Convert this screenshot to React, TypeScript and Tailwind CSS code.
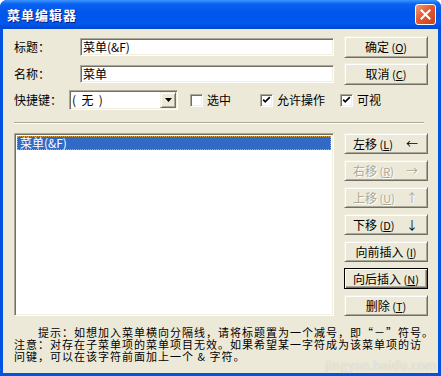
import React from 'react';

const raised =
  'border border-t-[#f1efe2] border-l-[#f1efe2] border-r-[#716f64] border-b-[#716f64] shadow-[inset_1px_1px_0_#fff,inset_-1px_-1px_0_#aca899]';
const sunken =
  'border border-t-[#aca899] border-l-[#aca899] border-r-white border-b-white shadow-[inset_1px_1px_0_#716f64,inset_-1px_-1px_0_#f1efe2]';

interface BtnProps {
  children: React.ReactNode;
  disabled?: boolean;
  isDefault?: boolean;
  arrow?: string;
  className?: string;
}

const Btn: React.FC<BtnProps> = ({ children, disabled, isDefault, arrow, className = '' }) => {
  const frame = isDefault
    ? 'border border-black shadow-[inset_1px_1px_0_#fff,inset_-1px_-1px_0_#716f64,inset_-2px_-2px_0_#aca899]'
    : raised;
  const tone = disabled ? 'text-[#aca899] [text-shadow:1px_1px_0_#fff]' : 'text-black';
  return (
    <div className={`w-[84px] bg-[#ece9d8] flex items-center text-[12px] leading-none ${frame} ${tone} ${arrow ? 'justify-between pl-[8px] pr-[9px]' : 'justify-center'} ${className}`}>
      <span className="whitespace-nowrap">{children}</span>
      {arrow && <span className="text-[12px]">{arrow}</span>}
    </div>
  );
};

const Check: React.FC<{ checked?: boolean; label: string; className?: string }> = ({ checked, label, className = '' }) => (
  <div className={`flex items-center ${className}`}>
    <div className={`w-[13px] h-[13px] bg-white relative ${sunken}`}>
      {checked && (
        <svg width="13" height="13" viewBox="0 0 13 13" className="absolute -left-px -top-px">
          <path d="M3.2 5.6 L5.3 7.8 L9.8 3.2" stroke="#000" strokeWidth="1.7" fill="none" />
        </svg>
      )}
    </div>
    <span className="ml-[4px] text-[12px] leading-none">{label}</span>
  </div>
);

const Key: React.FC<{ k: string }> = ({ k }) => (
  <span className="text-[11px]">
    {' '}(<span className="underline">{k}</span>)
  </span>
);

export default function App() {
  return (
    <div
      lang="zh-CN"
      className="w-[441px] h-[376px] bg-white font-['Noto_Sans_CJK_SC',sans-serif] text-black [text-spacing-trim:space-all]"
    >
      <div className="w-full h-full flex flex-col rounded-t-[7px] overflow-hidden bg-[#0052e0]">
        {/* title bar */}
        <div className="h-[29px] flex items-center bg-[linear-gradient(to_bottom,#3d95ff_0%,#0a62f0_14%,#0055ea_45%,#0058ee_80%,#0147d0_100%)]">
          <span className="ml-[7px] text-white font-bold text-[13px] tracking-[1px] [text-shadow:1px_1px_0_#0a1a80]">
            菜单编辑器
          </span>
          <div className="ml-auto mr-[5px] w-[21px] h-[21px] rounded-[3px] border border-white bg-[linear-gradient(135deg,#f39a7b_0%,#e35a30_45%,#c9401c_100%)] flex items-center justify-center">
            <svg width="11" height="11" viewBox="0 0 11 11">
              <path d="M1.5 1.5 L9.5 9.5 M9.5 1.5 L1.5 9.5" stroke="#fff" strokeWidth="2" strokeLinecap="square" />
            </svg>
          </div>
        </div>

        {/* body */}
        <div className="flex-1 mx-[3px] mb-[3px] bg-[#ece9d8] relative pl-[11px] pr-[10px] flex flex-col text-[12px]">
          <div className="flex items-center h-[22px] mt-[7px]">
            <span className="w-[66px]">标题：</span>
            <div className={`w-[254px] h-[18px] bg-white flex items-center pl-[2px] ${sunken}`}>
              菜单(&amp;F)
            </div>
            <Btn className="ml-[10px] h-[22px]">
              确定<Key k="O" />
            </Btn>
          </div>

          <div className="flex items-center h-[22px] mt-[5px]">
            <span className="w-[66px]">名称：</span>
            <div className={`w-[254px] h-[18px] bg-white flex items-center pl-[2px] ${sunken}`}>
              菜单
            </div>
            <Btn className="ml-[10px] h-[22px]">
              取消<Key k="C" />
            </Btn>
          </div>

          <div className="flex items-center h-[22px] mt-[4px]">
            <span className="w-[55px]">快捷键：</span>
            <div className={`w-[109px] h-[20px] bg-white flex items-center ${sunken}`}>
              <span className="flex-1 pl-[2px] whitespace-pre">(  无  )</span>
              <div className={`w-[16px] h-[16px] mr-px bg-[#ece9d8] flex items-center justify-center ${raised}`}>
                <svg width="7" height="4" viewBox="0 0 7 4">
                  <path d="M0 0h7l-3.5 4z" fill="#000" />
                </svg>
              </div>
            </div>
            <Check label="选中" className="ml-[12px] w-[70px]" />
            <Check label="允许操作" checked className="w-[80px]" />
            <Check label="可视" checked />
          </div>

          <div className="mt-[11px] w-[410px] border-t border-t-[#aca899] border-b border-b-white" />

          <div className="flex mt-[9px]">
            <div className={`w-[320px] h-[183px] bg-white p-[2px] ${sunken}`}>
              <div className="h-[14px] bg-[#316ac5] text-white border border-dotted border-[#d8a040] flex items-center pl-[2px] text-[12px] leading-none">
                菜单(&amp;F)
              </div>
            </div>
            <div className="ml-[10px] flex flex-col gap-[6px]">
              <Btn className="h-[21px]" arrow="←">
                左移<Key k="L" />
              </Btn>
              <Btn className="h-[21px]" arrow="→" disabled>
                右移<Key k="R" />
              </Btn>
              <Btn className="h-[21px]" arrow="↑" disabled>
                上移<Key k="U" />
              </Btn>
              <Btn className="h-[21px]" arrow="↓">
                下移<Key k="D" />
              </Btn>
              <Btn className="h-[21px]">
                向前插入<Key k="I" />
              </Btn>
              <Btn className="h-[21px]" isDefault>
                向后插入<Key k="N" />
              </Btn>
              <Btn className="h-[21px]">
                删除<Key k="T" />
              </Btn>
            </div>
          </div>

          <div className="mt-[10px] text-[11px] tracking-[1px] leading-[12px] whitespace-nowrap">
            <div className="pl-[24px]">
              提示：如想加入菜单横向分隔线，请将标题置为一个减号，即
              <span className="[font-feature-settings:'fwid']">“-”</span>
              符号。
            </div>
            <div>注意：对存在子菜单项的菜单项目无效。如果希望某一字符成为该菜单项的访</div>
            <div>问键，可以在该字符前面加上一个 &amp; 字符。</div>
          </div>

          <span className="absolute left-[322px] top-[330px] text-[12px] leading-none text-white/70 [text-shadow:0_0_1px_#b0ad9f] tracking-[0.5px]">
            jingyan.baidu.com
          </span>
        </div>
      </div>
    </div>
  );
}
